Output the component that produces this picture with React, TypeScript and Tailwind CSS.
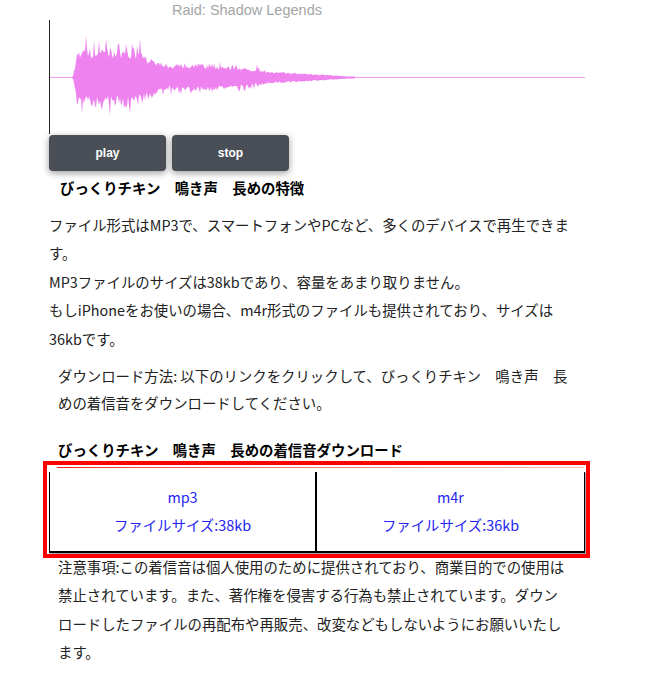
import React from "react"

function rng(seed: number) {
  let s = seed
  return () => {
    s |= 0
    s = (s + 0x6d2b79f5) | 0
    let t = Math.imul(s ^ (s >>> 15), 1 | s)
    t = (t + Math.imul(t ^ (t >>> 7), 61 | t)) ^ t
    return ((t ^ (t >>> 14)) >>> 0) / 4294967296
  }
}

// envelope in absolute page x
function env(ax: number) {
  if (ax < 73) return 0
  if (ax < 77) return ((ax - 73) / 4) * 24
  if (ax < 135) return 27
  if (ax < 166) return 27 - ((ax - 135) / 31) * 15
  if (ax < 215) return 12.5
  if (ax < 275) return 11.5 - ((ax - 215) / 60) * 6
  if (ax < 350) return 5.5 - ((ax - 275) / 75) * 5
  return 0
}

const MID = 57
const wave = (() => {
  const r = rng(11)
  const top: string[] = []
  const bot: string[] = []
  for (let x = 22; x <= 305; x += 1) {
    const ax = x + 50
    const e = env(ax)
    let t = e * (0.65 + 0.4 * r())
    let b = e * (0.65 + 0.4 * r())
    if (ax > 80 && ax < 145 && r() > 0.78) t += 5 + r() * 12
    if (ax > 80 && ax < 145 && r() > 0.8) b += 4 + r() * 10
    if (ax > 160 && ax < 260 && r() > 0.82) t += 2 + r() * 4
    if (ax > 160 && ax < 260 && r() > 0.82) b += 2 + r() * 5
    top.push(`L${x},${(MID - Math.max(t, 0.6)).toFixed(1)}`)
    bot.unshift(`L${x},${(MID + 1 + Math.max(b, 0.6)).toFixed(1)}`)
  }
  return `M22,${MID} ${top.join(" ")} ${bot.join(" ")} Z`
})()

function Waveform() {
  return (
    <div className="ml-[49px] h-[114px] w-[536px] border-l border-[#222]">
      <svg width="535" height="114" viewBox="0 0 535 114">
        <rect x="0" y={MID} width="535" height="1" fill="#f49cf4" />
        <path d={wave} fill="#ee82ee" />
      </svg>
    </div>
  )
}

export default function App() {
  return (
    <div className="relative h-[674px] w-full overflow-hidden bg-white font-['Noto_Sans_CJK_JP',sans-serif] text-[14.4px] text-[#222]">
      <div className="ml-[172px] h-5 font-['Liberation_Sans',sans-serif] text-[14.5px] leading-5 text-[#a5a5a5]">
        Raid: Shadow Legends
      </div>
      <Waveform />
      <div className="ml-[49px] mt-[1px] flex gap-[6px]">
        <button className="h-9 w-[117px] rounded-[4px] bg-[#4a4f57] font-['Liberation_Sans',sans-serif] text-[12px] font-bold text-white shadow-[0_2px_7px_rgba(0,0,0,0.4)]">
          play
        </button>
        <button className="h-9 w-[117px] rounded-[4px] bg-[#4a4f57] font-['Liberation_Sans',sans-serif] text-[12px] font-bold text-white shadow-[0_2px_7px_rgba(0,0,0,0.4)]">
          stop
        </button>
      </div>
      <h3 className="ml-[60px] mt-[3px] font-bold leading-7 text-black">びっくりチキン　鳴き声　長めの特徴</h3>
      <div className="ml-[49px] w-[536px]">
        <p className="mt-[9px] leading-[28.4px]">
          ファイル形式はMP3で、スマートフォンやPCなど、多くのデバイスで再生できます。
          <br />
          MP3ファイルのサイズは38kbであり、容量をあまり取りません。
          <br />
          もしiPhoneをお使いの場合、m4r形式のファイルも提供されており、サイズは36kbです。
        </p>
        <p className="mt-[9px] pl-[9px] pr-[13px] leading-[27px]">
          ダウンロード方法: 以下のリンクをクリックして、びっくりチキン　鳴き声　長めの着信音をダウンロードしてください。
        </p>
        <h3 className="ml-[9px] mt-[20px] font-bold leading-7 text-black">
          びっくりチキン　鳴き声　長めの着信音ダウンロード
        </h3>
        <div className="ml-[8px] mt-[3px] h-px w-[527px] bg-gradient-to-r from-[#ff1a1a] to-[#ffb8b8]" />
        <div className="mt-[4px] grid grid-cols-2 border-b-2 border-l border-r border-black shadow-[1px_1px_1px_rgba(0,0,0,0.35)]">
          <div className="border-r-2 border-black pb-[12px] pt-[11px] text-center leading-7 text-[#2424f4]">
            <div>mp3</div>
            <div>ファイルサイズ:38kb</div>
          </div>
          <div className="pb-[12px] pt-[11px] text-center leading-7 text-[#2424f4]">
            <div>m4r</div>
            <div>ファイルサイズ:36kb</div>
          </div>
        </div>
        <p className="mt-0 pl-[9px] pr-[13px] leading-[28.4px]">
          注意事項:この着信音は個人使用のために提供されており、商業目的での使用は禁止されています。また、著作権を侵害する行為も禁止されています。ダウンロードしたファイルの再配布や再販売、改変などもしないようにお願いいたします。
        </p>
      </div>
      <div className="pointer-events-none absolute left-[43px] top-[461px] h-[97px] w-[547px] border-4 border-[#ff0000]" />
    </div>
  )
}
